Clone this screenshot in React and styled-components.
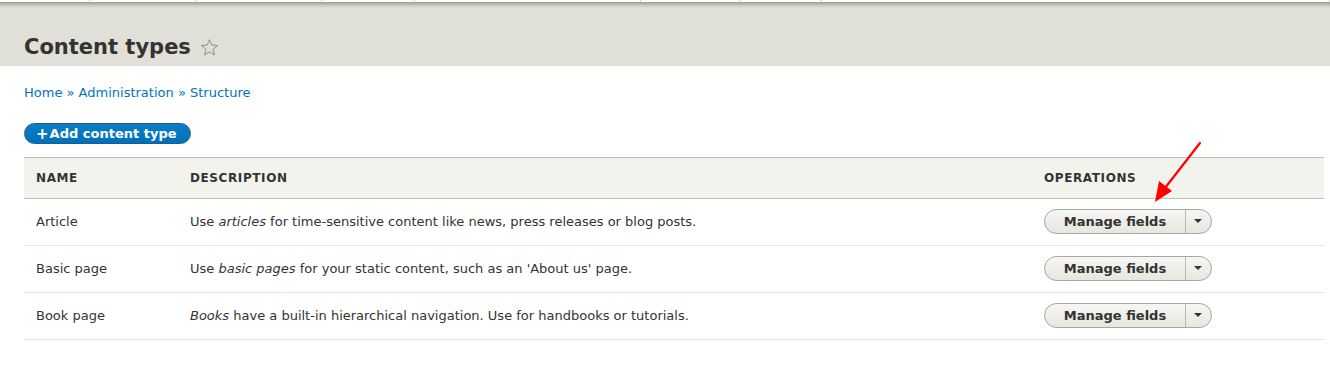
import styled, { createGlobalStyle } from "styled-components";

const Global = createGlobalStyle`
  * { box-sizing: border-box; }
  body {
    margin: 0;
    background: #fff;
    font-family: "DejaVu Sans", "Liberation Sans", sans-serif;
    color: #333;
    font-size: 13px;
  }
`;

const tabs = [90, 107, 125, 93, 226, 100, 81];

const rows = [
  {
    name: "Article",
    desc: (
      <>
        Use <em>articles</em> for time-sensitive content like news, press releases or blog posts.
      </>
    ),
  },
  {
    name: "Basic page",
    desc: (
      <>
        Use <em>basic pages</em> for your static content, such as an 'About us' page.
      </>
    ),
  },
  {
    name: "Book page",
    desc: (
      <>
        <em>Books</em> have a built-in hierarchical navigation. Use for handbooks or tutorials.
      </>
    ),
  },
];

function App() {
  return (
    <Page>
      <Global />
      <Toolbar>
        {tabs.map((w, i) => (
          <Tab key={i} style={{ width: w }} />
        ))}
        <Spacer />
        <Tab style={{ width: 14 }} />
      </Toolbar>
      <Header>
        <Title>
          Content types
          <Star viewBox="0 0 20 20">
            <path
              d="M10 1.8l2.4 5.6 6 .5-4.6 4 1.4 5.9L10 14.6l-5.2 3.2 1.4-5.9-4.6-4 6-.5z"
              fill="none"
              stroke="#8a8a7e"
              strokeWidth="1"
              strokeLinejoin="round"
            />
          </Star>
        </Title>
      </Header>
      <Content>
        <Breadcrumb>
          <a href="#">Home</a> » <a href="#">Administration</a> » <a href="#">Structure</a>
        </Breadcrumb>
        <AddButton href="#">
          <span>+</span>Add content type
        </AddButton>
        <TableWrap>
          <Table>
            <thead>
              <tr>
                <Th $w="154px">Name</Th>
                <Th>Description</Th>
                <Th $w="292px">Operations</Th>
              </tr>
            </thead>
            <tbody>
              {rows.map((r) => (
                <tr key={r.name}>
                  <Td>{r.name}</Td>
                  <Td>{r.desc}</Td>
                  <Td>
                    <Dropbutton>
                      <MainAction>Manage fields</MainAction>
                      <Toggle>
                        <Caret />
                      </Toggle>
                    </Dropbutton>
                  </Td>
                </tr>
              ))}
            </tbody>
          </Table>
          <Arrow viewBox="0 0 60 64">
            <line x1="48" y1="3" x2="13" y2="48" stroke="#f00" strokeWidth="2.2" strokeLinecap="round" />
            <polygon points="3,62 7,41 20,51" fill="#f00" />
          </Arrow>
        </TableWrap>
      </Content>
    </Page>
  );
}

export default App;

const Page = styled.div`
  width: 1330px;
  min-height: 371px;
`;

const Toolbar = styled.div`
  display: flex;
  height: 2px;
  background: #fff;
`;

const Tab = styled.div`
  height: 2px;
  border-right: 1px solid #d4d4d0;
`;

const Spacer = styled.div`
  flex: 1;
`;

const Header = styled.div`
  height: 64px;
  background: linear-gradient(#9d9d99 0, #a9a9a5 1px, #c4c4be 3px, #d9d9d2 5px, #e0e0d8 7px);
  padding: 31px 24px 0;
`;

const Title = styled.h1`
  margin: 0;
  font-size: 21px;
  font-weight: bold;
  line-height: 28px;
  color: #333;
  display: flex;
  align-items: center;
  gap: 9px;
`;

const Star = styled.svg`
  width: 19px;
  height: 19px;
  margin-top: 1px;
`;

const Content = styled.div`
  padding: 19px 6px 0 24px;
`;

const Breadcrumb = styled.nav`
  font-size: 13px;
  line-height: 16px;
  color: #0074bd;
  a {
    color: #0074bd;
    text-decoration: none;
  }
`;

const AddButton = styled.a`
  display: inline-flex;
  align-items: center;
  margin-top: 22px;
  height: 21px;
  padding: 0 13px 0 11px;
  border-radius: 20px;
  background: linear-gradient(#0c7ec5, #0071b8);
  border: 1px solid #1e5c90;
  color: #fff;
  font-weight: bold;
  font-size: 13px;
  text-decoration: none;
  span {
    font-size: 15px;
    margin-right: 1px;
  }
`;

const TableWrap = styled.div`
  position: relative;
  margin-top: 13px;
`;

const Table = styled.table`
  width: 100%;
  border-collapse: collapse;
  border-top: 1px solid #bfbfba;
`;

const Th = styled.th`
  width: ${(p) => p.$w || "auto"};
  height: 41px;
  padding: 0 12px;
  text-align: left;
  background: #f3f3ee;
  border-bottom: 1px solid #bfbfba;
  font-size: 12px;
  font-weight: bold;
  text-transform: uppercase;
  letter-spacing: 0.6px;
  color: #333;
`;

const Td = styled.td`
  height: 47px;
  padding: 0 12px 2px;
  border-bottom: 1px solid #e6e4df;
  font-size: 13px;
  color: #333;
`;

const Dropbutton = styled.div`
  display: inline-flex;
  height: 25px;
  width: 168px;
  border: 1px solid #a6a6a6;
  border-radius: 13px;
  background: linear-gradient(#f6f6f3, #e7e7df);
  overflow: hidden;
`;

const MainAction = styled.span`
  flex: 1;
  display: flex;
  align-items: center;
  justify-content: center;
  font-weight: bold;
  font-size: 13px;
  color: #333;
  border-right: 1px solid #b8b8b2;
`;

const Toggle = styled.span`
  width: 25px;
  display: flex;
  align-items: center;
  justify-content: center;
  padding-right: 2px;
`;

const Caret = styled.span`
  width: 0;
  height: 0;
  border-left: 4px solid transparent;
  border-right: 4px solid transparent;
  border-top: 4px solid #333;
`;

const Arrow = styled.svg`
  position: absolute;
  left: 1128px;
  top: -17px;
  width: 60px;
  height: 64px;
`;
